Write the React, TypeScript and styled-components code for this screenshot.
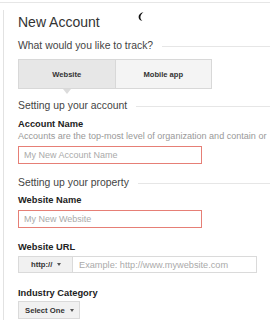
import React from "react";
import styled, { createGlobalStyle } from "styled-components";

const Global = createGlobalStyle`
  html, body { margin: 0; padding: 0; background: #fff; }
  body { font-family: "Liberation Sans", Arial, sans-serif; overflow: hidden; }
  * { box-sizing: border-box; }
`;

const Frame = styled.div`
  position: relative;
  margin-top: 2px;
  border-top: 1px solid #e6e6e6;
  width: 270px;
  height: 318px;
  overflow: hidden;
`;

const Panel = styled.div`
  margin: 7px 0 0 3px;
  border-left: 1px solid #e2e2e2;
  padding-left: 14px;
  display: flex;
  flex-direction: column;
  height: 320px;
`;

const Spinner = styled.svg`
  position: absolute;
  left: 137px;
  top: 7px;
`;

const Title = styled.h1`
  margin: 4px 0 0;
  font-size: 14px;
  line-height: 16px;
  font-weight: normal;
  color: #333;
`;

const Heading = styled.div<{ $mt: number }>`
  margin-top: ${(p) => p.$mt}px;
  display: flex;
  align-items: center;
  gap: 9px;
  font-size: 10.4px;
  line-height: 12px;
  color: #444;
  white-space: nowrap;
  &::after {
    content: "";
    flex: 1;
    height: 1px;
    background: #e6e6e6;
  }
`;

const Tabs = styled.div`
  margin-top: 7px;
  display: flex;
  width: 194px;
  height: 30px;
  border: 1px solid #d8d8d8;
`;

const Tab = styled.div<{ $active?: boolean }>`
  position: relative;
  flex: 1;
  display: flex;
  align-items: center;
  justify-content: center;
  font-size: 7.6px;
  font-weight: bold;
  color: #333;
  background: ${(p) => (p.$active ? "#e7e7e7" : "#f4f4f4")};
  & + & { border-left: 1px solid #d8d8d8; }
  ${(p) =>
    p.$active &&
    `&::after {
      content: "";
      position: absolute;
      left: 50%;
      bottom: -6px;
      margin-left: -4px;
      border-left: 4px solid transparent;
      border-right: 4px solid transparent;
      border-top: 5px solid #dcdcdc;
    }`}
`;

const Label = styled.div<{ $mt: number }>`
  margin-top: ${(p) => p.$mt}px;
  font-size: 9.3px;
  line-height: 11px;
  font-weight: bold;
  color: #222;
`;

const Desc = styled.div`
  margin-top: 1px;
  font-size: 9.05px;
  line-height: 11px;
  color: #999;
  white-space: nowrap;
`;

const TextInput = styled.input<{ $mt: number }>`
  margin-top: ${(p) => p.$mt}px;
  width: 184px;
  height: 18px;
  border: 1px solid #e67f76;
  padding: 0 0 0 5px;
  font-family: "Liberation Sans", Arial, sans-serif;
  font-size: 9px;
  outline: none;
  &::placeholder { color: #aaa; }
`;

const Row = styled.div`
  margin-top: 3px;
  display: flex;
  height: 17px;
`;

const DropButton = styled.div<{ $w: number; $pl: number }>`
  width: ${(p) => p.$w}px;
  height: 100%;
  display: flex;
  align-items: center;
  gap: 5px;
  padding-left: ${(p) => p.$pl}px;
  background: #f1f1f1;
  border: 1px solid #dadada;
  font-size: 7.7px;
  font-weight: bold;
  color: #333;
  flex-shrink: 0;
  &::after {
    content: "";
    border-left: 2.5px solid transparent;
    border-right: 2.5px solid transparent;
    border-top: 3px solid #555;
  }
`;

const SelectBox = styled(DropButton)`
  margin-top: 2px;
  height: 18px;
`;

const UrlInput = styled.input`
  width: 184px;
  height: 100%;
  border: 1px solid #dadada;
  border-left: none;
  padding: 0 0 0 6px;
  font-family: "Liberation Sans", Arial, sans-serif;
  font-size: 9.2px;
  outline: none;
  &::placeholder { color: #aaa; }
`;

export default function App() {
  return (
    <>
      <Global />
      <Frame>
        <Spinner width="9" height="11" viewBox="0 0 9 11">
          <path
            d="M6.5 2.2 C3.5 2.6 1.6 4.6 1.6 7 C1.6 9.2 3.2 10.6 5.4 10.8 C3.9 9.9 3.3 8.6 3.4 7.1 C3.5 5.2 4.6 3.6 6.5 2.2 Z"
            fill="#111"
          />
        </Spinner>
        <Panel>
          <Title>New Account</Title>
          <Heading $mt={10}>What would you like to track?</Heading>
          <Tabs>
            <Tab $active>Website</Tab>
            <Tab>Mobile app</Tab>
          </Tabs>
          <Heading $mt={11}>Setting up your account</Heading>
          <Label $mt={7}>Account Name</Label>
          <Desc>Accounts are the top-most level of organization and contain or</Desc>
          <TextInput $mt={4} placeholder="My New Account Name" />
          <Heading $mt={13}>Setting up your property</Heading>
          <Label $mt={6}>Website Name</Label>
          <TextInput $mt={4} placeholder="My New Website" />
          <Label $mt={14}>Website URL</Label>
          <Row>
            <DropButton $w={55} $pl={12}>http://</DropButton>
            <UrlInput placeholder="Example: http://www.mywebsite.com" />
          </Row>
          <Label $mt={15}>Industry Category</Label>
          <SelectBox $w={62} $pl={6}>Select One</SelectBox>
        </Panel>
      </Frame>
    </>
  );
}
